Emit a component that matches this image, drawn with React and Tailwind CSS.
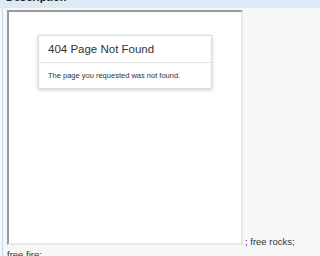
export default function App() {
  return (
    <div className="w-[320px] h-[256px] overflow-hidden bg-[#f7f7f7] font-['Liberation_Sans',Arial,sans-serif] text-[#222]">
      <div className="h-[8px] bg-[#dce9f6] overflow-hidden relative">
        <div className="absolute left-[6px] top-[-9px] text-[11px] font-bold leading-[12px] text-[#222]">Description</div>
      </div>
      <div className="ml-[2px] border-l border-[#c5d9ee] pl-[4px] pt-[2px] text-[9.5px] leading-[13px] text-[#333]">
        <div className="inline-block align-baseline overflow-hidden w-[236px] h-[235px] bg-white border-2 border-t-[#9a9a9a] border-l-[#9a9a9a] border-r-[#e8e8e8] border-b-[#e8e8e8]">
          <div className="ml-[29px] mt-[23px] w-[174px] h-[54px] border border-[#dcdcdc] bg-white shadow-[0_1px_4px_rgba(0,0,0,0.2)] font-['Liberation_Sans',Arial,sans-serif]">
            <div className="h-[27px] pt-[1px] flex items-center pl-[9px] text-[11.5px] text-[#333] border-b border-[#e3e3e3]">404 Page Not Found</div>
            <div className="h-[25px] flex items-center pl-[9px] text-[7.5px] text-[#333]">The page you requested was not found.</div>
          </div>
        </div>
        <span className="ml-[2px]">; free rocks;</span>
        <br />
        <span>free fire;</span>
      </div>
    </div>
  );
}
